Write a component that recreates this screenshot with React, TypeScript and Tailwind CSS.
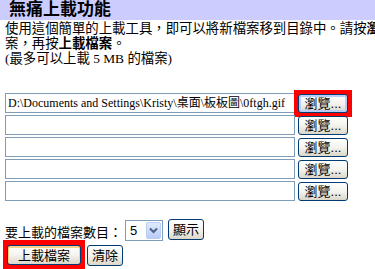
import React from 'react';

const serifCjk = 'font-["Liberation_Serif","Noto_Sans_CJK_TC",serif]';
const sansCjk = 'font-["Liberation_Sans","Noto_Sans_CJK_TC",sans-serif]';

// XP-style button
const btn =
  'flex items-center justify-center rounded-[3px] border border-[#003c74] bg-gradient-to-b from-white via-[#f4f3ee] to-[#dcd7c8] text-[13px] leading-none text-black ' +
  sansCjk;

const rows = [
  'D:\\Documents and Settings\\Kristy\\桌面\\板板圖\\0ftgh.gif',
  '',
  '',
  '',
  '',
];

export default function App() {
  return (
    <div className={`w-[375px] h-[269px] overflow-hidden bg-white text-black ${serifCjk}`}>
      {/* Title bar */}
      <div className="h-[20px] bg-[#ccccff] pl-[9px] text-[17px] font-bold leading-[20px] whitespace-nowrap">
        無痛上載功能
      </div>

      <p className="px-[5px] pt-[1px] text-[13.4px] leading-[15px] whitespace-nowrap">
        使用這個簡單的上載工具，即可以將新檔案移到目錄中。請按<b>瀏覽</b>選取檔
        <br />
        案，再按<b>上載檔案</b>。
        <br />
        (最多可以上載 5 MB 的檔案)
      </p>

      {/* File rows */}
      <div className="mt-[27px] flex flex-col gap-[2px] pl-[5px]">
        {rows.map((value, i) => (
          <div key={i} className="flex items-center gap-[3px]">
            <div className="h-[20px] w-[290px] shrink-0 border border-[#7f9db9] bg-white pl-[2px] text-[12px] leading-[18px] whitespace-nowrap overflow-hidden">
              {value}
            </div>
            {i === 0 ? (
              <div className="-m-[4px] bg-[#ff0000] p-[4px]">
                <button className={`${btn} h-[19px] w-[50px] shadow-[inset_0_0_0_2px_#b8cef6]`}>
                  瀏覽...
                </button>
              </div>
            ) : (
              <button className={`${btn} h-[19px] w-[50px]`}>瀏覽...</button>
            )}
          </div>
        ))}
      </div>

      {/* Count row */}
      <div className={`mt-[18px] flex items-end pl-[5px] text-[13px] ${sansCjk}`}>
        <span className="leading-[16px] w-[120px] whitespace-nowrap">要上載的檔案數目：</span>
        <div className="flex h-[21px] w-[38px] items-stretch border border-[#7f9db9] bg-white">
          <span className="flex-1 pl-[4px] text-[13px] leading-[19px]">5</span>
          <span className="m-[1px] flex w-[15px] items-center justify-center rounded-[2px] border border-[#b9cdf6] bg-gradient-to-b from-[#e2ebfd] to-[#b6cbf6]">
            <svg width="9" height="7" viewBox="0 0 9 7">
              <path d="M1 1.5 L4.5 5 L8 1.5" fill="none" stroke="#4d6185" strokeWidth="2" />
            </svg>
          </span>
        </div>
        <button className={`${btn} ml-[5px] mb-[1px] h-[21px] w-[36px]`}>顯示</button>
      </div>

      {/* Action row */}
      <div className="mt-[-1px] flex items-start gap-[2px] pl-[3px]">
        <div className="bg-[#ff0000] px-[4px] pt-[5px] pb-[4px]">
          <button className={`${btn} h-[20px] w-[74px] shadow-[inset_0_1px_0_1px_#fbd38a]`}>
            上載檔案
          </button>
        </div>
        <button className={`${btn} mt-[5px] h-[21px] w-[36px]`}>清除</button>
      </div>
    </div>
  );
}
